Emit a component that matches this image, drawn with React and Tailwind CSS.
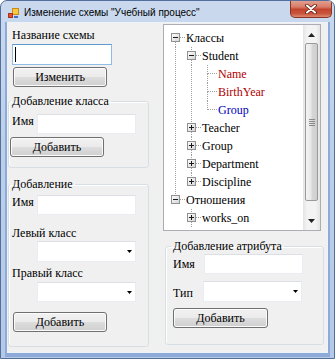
import React from "react";

function Btn({ children, className = "" }) {
  return (
    <div
      className={`flex h-[20px] items-center justify-center rounded-[3px] border border-[#707070] bg-[linear-gradient(180deg,#f2f2f2_0%,#ebebeb_48%,#dddddd_52%,#cfcfcf_100%)] text-[12px] leading-[14px] text-black shadow-[inset_0_0_0_1px_#fbfbfb] ${className}`}
    >
      {children}
    </div>
  );
}

function Input({ className = "" }) {
  return <div className={`shrink-0 border border-[#e9ecf1] border-t-[#dcdfe4] bg-white ${className}`} />;
}

function Combo({ className = "" }) {
  return (
    <div className={`flex shrink-0 items-center justify-end border border-[#e9ecf1] border-t-[#dcdfe4] bg-white pr-[3px] ${className}`}>
      <svg width="5" height="3" viewBox="0 0 5 3">
        <polygon points="0,0 5,0 2.5,3" fill="#000" />
      </svg>
    </div>
  );
}

function Label({ children, className = "" }) {
  return <span className={`block shrink-0 whitespace-nowrap text-[12px] leading-[14px] text-black ${className}`}>{children}</span>;
}

const rows = [
  { L: 0, t: "Классы", exp: "-", anc: [], top: false, bot: true, c: "text-black" },
  { L: 1, t: "Student", exp: "-", anc: [0], top: true, bot: true, c: "text-black" },
  { L: 2, t: "Name", anc: [0, 1], top: true, bot: true, c: "text-[#b00000]" },
  { L: 2, t: "BirthYear", anc: [0, 1], top: true, bot: true, c: "text-[#b00000]" },
  { L: 2, t: "Group", anc: [0, 1], top: true, bot: false, c: "text-[#0000c0]" },
  { L: 1, t: "Teacher", exp: "+", anc: [0], top: true, bot: true, c: "text-black" },
  { L: 1, t: "Group", exp: "+", anc: [0], top: true, bot: true, c: "text-black" },
  { L: 1, t: "Department", exp: "+", anc: [0], top: true, bot: true, c: "text-black" },
  { L: 1, t: "Discipline", exp: "+", anc: [0], top: true, bot: false, c: "text-black" },
  { L: 0, t: "Отношения", exp: "-", anc: [], top: true, bot: false, c: "text-black" },
  { L: 1, t: "works_on", exp: "+", anc: [], top: true, bot: true, c: "text-black" },
];

function TreeRow({ r, i }) {
  const w = 16 * r.L + 22;
  const cx = 16 * r.L + 11;
  const dot = { stroke: "#a0a0a0", strokeWidth: 1, strokeDasharray: "1 1" };
  return (
    <div className="flex h-[18px] shrink-0 items-center">
      <svg width={w} height="18" className="shrink-0" shapeRendering="crispEdges">
        <defs>
          <linearGradient id={`bx${i}`} x1="0" y1="0" x2="1" y2="1">
            <stop offset="0" stopColor="#ffffff" />
            <stop offset="1" stopColor="#d4d4d4" />
          </linearGradient>
        </defs>
        {r.anc.map((a) => (
          <line key={a} x1={16 * a + 11.5} y1="0" x2={16 * a + 11.5} y2="18" {...dot} />
        ))}
        {r.top && <line x1={cx + 0.5} y1="0" x2={cx + 0.5} y2="9" {...dot} />}
        {r.bot && <line x1={cx + 0.5} y1="9" x2={cx + 0.5} y2="18" {...dot} />}
        <line x1={cx + 1} y1="8.5" x2={16 * r.L + 21} y2="8.5" {...dot} />
        {r.exp && (
          <g>
            <rect x={cx - 3.5} y="4.5" width="8" height="8" fill={`url(#bx${i})`} stroke="#919191" />
            <line x1={cx - 2} y1="8.5" x2={cx + 3} y2="8.5" stroke="#1a1a1a" />
            {r.exp === "+" && <line x1={cx + 0.5} y1="6" x2={cx + 0.5} y2="11" stroke="#1a1a1a" />}
          </g>
        )}
      </svg>
      <span className={`whitespace-nowrap text-[12px] leading-[18px] ${r.c}`}>{r.t}</span>
    </div>
  );
}

function Scrollbar() {
  return (
    <div className="flex w-[17px] shrink-0 flex-col bg-[linear-gradient(90deg,#e4e4e4,#f3f3f3_25%,#f3f3f3_75%,#e4e4e4)]">
      <div className="flex h-[17px] items-center justify-center pt-[2px]">
        <svg width="7" height="4" viewBox="0 0 7 4">
          <polygon points="3.5,0 7,4 0,4" fill="#222" />
        </svg>
      </div>
      <div className="mx-[2px] mt-[1px] flex h-[158px] flex-col items-center justify-center gap-[1px] rounded-[2px] border border-[#9a9a9a] bg-[linear-gradient(90deg,#f4f4f4,#e8e8e8_45%,#d6d6d6_55%,#cfcfcf)]">
        <div className="h-px w-[6px] bg-[#8a8a8a]" />
        <div className="h-px w-[6px] bg-[#8a8a8a]" />
        <div className="h-px w-[6px] bg-[#8a8a8a]" />
        <div className="h-px w-[6px] bg-[#8a8a8a]" />
      </div>
      <div className="flex-1" />
      <div className="flex h-[17px] items-center justify-center pb-[1px]">
        <svg width="7" height="4" viewBox="0 0 7 4">
          <polygon points="0,0 7,0 3.5,4" fill="#222" />
        </svg>
      </div>
    </div>
  );
}

export default function App() {
  return (
    <div className="h-[359px] w-[335px] overflow-hidden rounded-t-[7px] border border-[#52709b] bg-[linear-gradient(180deg,#cad9ee_0%,#bdd0ea_40%,#b4c9e7_100%)] [font-family:'Liberation_Serif','Times_New_Roman',serif]">
      {/* title bar */}
      <div className="flex h-[21px]">
        <svg width="11" height="11" viewBox="0 0 11 11" className="ml-[7px] mt-[7px] shrink-0">
          <rect x="4.5" y="0.5" width="6" height="6" fill="#f7c843" stroke="#c98d12" />
          <rect x="0.5" y="5.5" width="4" height="4" fill="#e5502f" stroke="#a8321a" />
          <rect x="6" y="8" width="4" height="2" fill="#3d72c6" />
        </svg>
        <span className="ml-[5px] mt-[5px] whitespace-nowrap text-[10px] leading-[14px] text-black [font-family:'Liberation_Sans',Arial,sans-serif]">
          Изменение схемы "Учебный процесс"
        </span>
        <div className="-mt-[1px] ml-auto mr-[2px] flex h-[18px] w-[42px] items-center justify-center rounded-b-[5px] border border-t-0 border-[#8a3426] bg-[linear-gradient(180deg,#e6a494_0%,#d77e69_40%,#c4442e_55%,#c9553d_80%,#dd8a70_100%)]">
          <svg width="12" height="10" viewBox="0 0 12 10">
            <path d="M2 1.5 L10 8.5 M10 1.5 L2 8.5" stroke="#5a1a10" strokeWidth="3.6" strokeLinecap="round" />
            <path d="M2 1.5 L10 8.5 M10 1.5 L2 8.5" stroke="#ffffff" strokeWidth="2" strokeLinecap="round" />
          </svg>
        </div>
      </div>

      {/* client area */}
      <div className="ml-[6px] flex h-[331px] w-[321px] border border-[#eef3f9] bg-[#f0f0f0] shadow-[0_2px_0_2px_#8eaad8]">
        {/* left column */}
        <div className="flex w-[141px] shrink-0 flex-col">
          <Label className="ml-[4px] mt-[5px]">Название схемы</Label>
          <div className="ml-[4px] mt-[2px] h-[21px] w-[100px] border border-[#8fbde8] border-t-[#5e98cf] bg-white">
            <div className="ml-[2px] mt-[2px] h-[15px] w-px bg-black" />
          </div>
          <Btn className="ml-[5px] mt-[2px] w-[94px]">Изменить</Btn>

          <fieldset className="mt-[7px] rounded-[3px] border border-[#d5dfe5] pb-[10px] shadow-[inset_1px_1px_0_#ffffff]">
            <legend className="ml-[1px] px-[2px] text-[12px] leading-[14px] text-black">Добавление класса</legend>
            <div className="mt-[6px] flex">
              <Label className="ml-[3px] w-[25px]">Имя</Label>
              <Input className="h-[20px] w-[99px]" />
            </div>
            <Btn className="ml-[1px] mt-[3px] w-[94px]">Добавить</Btn>
          </fieldset>

          <fieldset className="mt-[9px] rounded-[3px] border border-[#d5dfe5] pb-[14px] shadow-[inset_1px_1px_0_#ffffff]">
            <legend className="ml-[1px] px-[2px] text-[12px] leading-[14px] text-black">Добавление</legend>
            <div className="mt-[4px] flex">
              <Label className="ml-[3px] w-[25px]">Имя</Label>
              <Input className="h-[20px] w-[99px]" />
            </div>
            <Label className="ml-[3px] mt-[11px]">Левый класс</Label>
            <Combo className="ml-[28px] mt-[1px] h-[21px] w-[99px]" />
            <Label className="ml-[3px] mt-[4px]">Правый класс</Label>
            <Combo className="ml-[28px] mt-[2px] h-[20px] w-[99px]" />
            <Btn className="ml-[4px] mt-[10px] w-[94px]">Добавить</Btn>
          </fieldset>
        </div>

        {/* right column */}
        <div className="ml-[14px] flex flex-col">
          <div className="mt-[1px] flex h-[207px] w-[158px] border border-[#abadb3] bg-white">
            <div className="flex flex-1 flex-col overflow-hidden pt-[4px]">
              {rows.map((r, i) => (
                <TreeRow key={i} r={r} i={i} />
              ))}
            </div>
            <Scrollbar />
          </div>

          <fieldset className="ml-[2px] mt-[8px] w-[159px] rounded-[3px] border border-[#d5dfe5] pb-[16px] shadow-[inset_1px_1px_0_#ffffff]">
            <legend className="ml-[5px] px-[2px] text-[12px] leading-[14px] text-black">Добавление атрибута</legend>
            <div className="mt-[1px] flex">
              <Label className="ml-[7px] mt-[3px] w-[31px]">Имя</Label>
              <Input className="h-[20px] w-[99px]" />
            </div>
            <div className="mt-[7px] flex">
              <Label className="ml-[7px] mt-[5px] w-[30px]">Тип</Label>
              <Combo className="h-[21px] w-[99px]" />
            </div>
            <Btn className="ml-[7px] mt-[6px] w-[95px]">Добавить</Btn>
          </fieldset>
        </div>
      </div>
    </div>
  );
}
